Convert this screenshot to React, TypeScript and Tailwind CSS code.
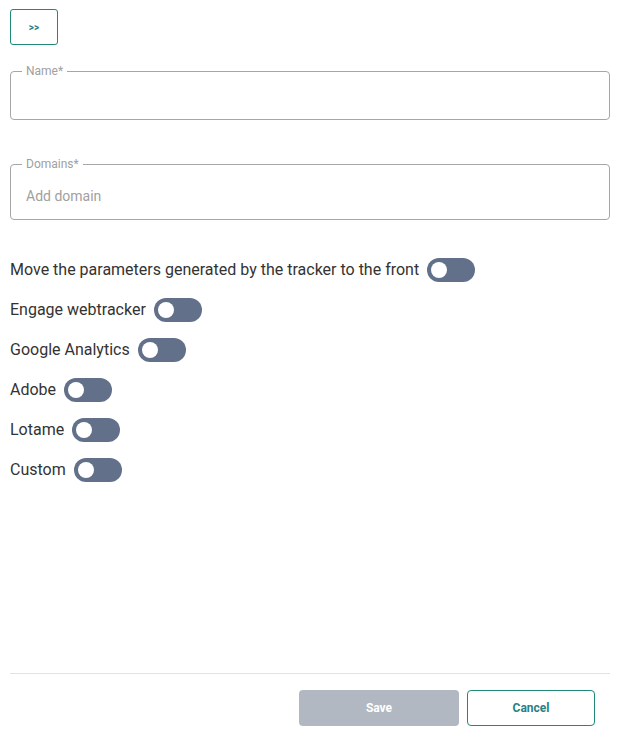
import React, { useState } from 'react';

const toggles = [
    'Move the parameters generated by the tracker to the front',
    'Engage webtracker',
    'Google Analytics',
    'Adobe',
    'Lotame',
    'Custom',
];

const Toggle: React.FC<{ on: boolean; onClick: () => void }> = ({ on, onClick }) => (
    <button
        type="button"
        onClick={onClick}
        className={`relative w-12 h-6 rounded-full flex items-center px-1 ${on ? 'bg-[#1f8a78] justify-end' : 'bg-[#627089] justify-start'}`}
    >
        <span className="block w-4 h-4 rounded-full bg-white" />
    </button>
);

export default function App() {
    const [state, setState] = useState<boolean[]>(toggles.map(() => false));

    return (
        <div className="h-screen flex flex-col pl-[10px] pr-[9px] pt-[9px] bg-white font-['Roboto',sans-serif] text-[#333333]">
            <button
                type="button"
                className="w-12 h-9 rounded-[3px] border border-[#1f8a78] text-[#2a7f86] text-[10px] font-bold"
            >
                &gt;&gt;
            </button>

            <div className="relative mt-[26px] h-[49px] border border-[#a6a6a6] rounded-[4px]">
                <span className="absolute -top-[8px] left-[11px] px-1 bg-white text-xs text-[#a0a0a0] leading-[14px]">Name*</span>
            </div>

            <div className="relative mt-[44px] h-[56px] border border-[#a6a6a6] rounded-[4px] flex items-center pl-[15px] pt-[7px]">
                <span className="absolute -top-[8px] left-[11px] px-1 bg-white text-xs text-[#a0a0a0] leading-[14px]">Domains*</span>
                <input
                    className="w-full outline-none text-sm placeholder:text-[#a0a0a0]"
                    placeholder="Add domain"
                />
            </div>

            <div className="mt-[38px] flex flex-col gap-4">
                {toggles.map((t, i) => (
                    <div key={t} className="flex items-center gap-2 h-6">
                        <span className="text-base">{t}</span>
                        <Toggle
                            on={state[i]}
                            onClick={() => setState(s => s.map((v, j) => (j === i ? !v : v)))}
                        />
                    </div>
                ))}
            </div>

            <div className="flex-1" />

            <div className="border-t border-[#e3e3e3] pt-4 pb-[17px] pr-[15px] flex justify-end gap-2">
                <button type="button" className="w-40 h-9 rounded-[4px] bg-[#b1b8c1] text-white text-xs font-bold">
                    Save
                </button>
                <button type="button" className="w-32 h-9 rounded-[4px] border border-[#1f8a78] text-[#2a7f86] text-xs font-bold">
                    Cancel
                </button>
            </div>
        </div>
    );
}
